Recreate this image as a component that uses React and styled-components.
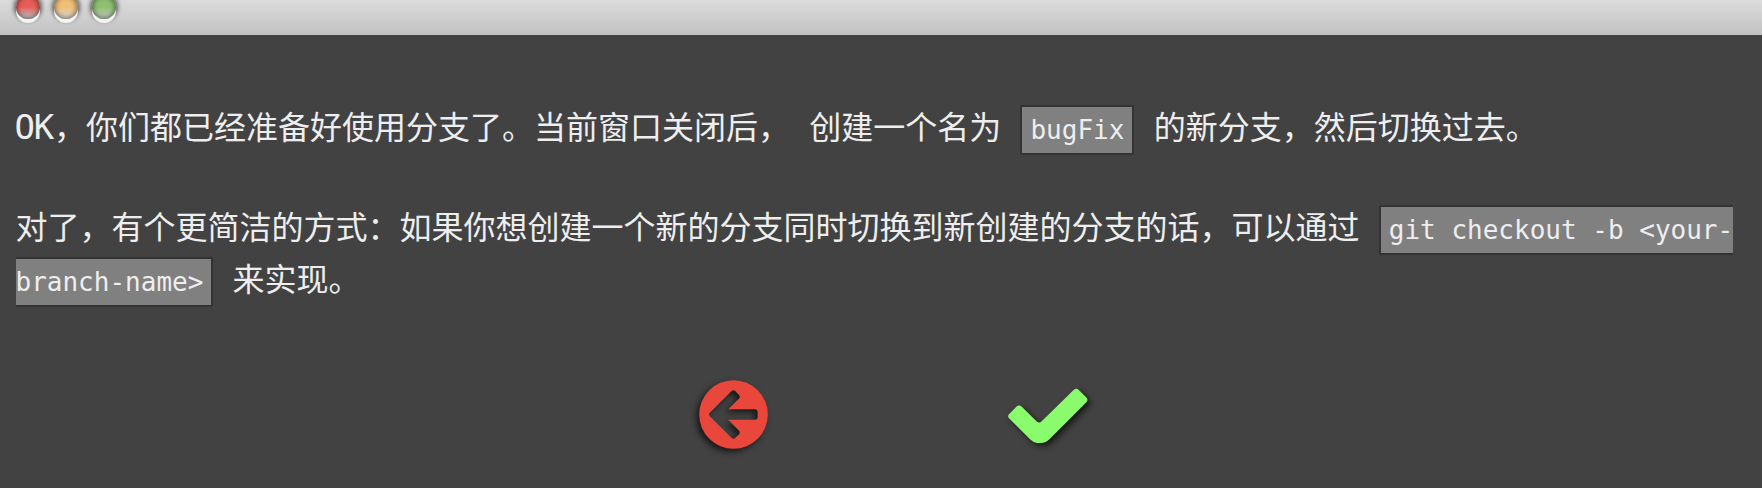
import React from "react";
import styled, { createGlobalStyle } from "styled-components";

const GlobalStyle = createGlobalStyle`
  body {
    margin: 0;
    background: #424242;
  }
`;

const Window = styled.div`
  box-sizing: border-box;
  width: 1762px;
  height: 488px;
  overflow: hidden;
  background: #424242;
  color: #eee;
  font-family: "DejaVu Sans Mono", "Noto Sans CJK SC", monospace;
`;

const TitleBar = styled.header`
  display: flex;
  gap: 14px;
  box-sizing: border-box;
  height: 35px;
  padding-left: 16px;
  background: linear-gradient(#dbdbdb, #c2c2c2);
`;

const Light = styled.span`
  width: 24px;
  height: 24px;
  margin-top: -5px;
  border-radius: 50%;
  background: linear-gradient(
    ${(p) => p.$color} 50%,
    ${(p) => p.$glow} 90%
  );
  box-shadow:
    0 4px 0 #f4f4f4,
    0 0 4px 2px rgba(0, 0, 0, 0.55),
    inset 0 0 5px 1px rgba(0, 0, 0, 0.5);
`;

const Content = styled.main`
  padding: 67px 16px 0 15.5px;
`;

const Paragraph = styled.p`
  margin: 0 0 48px;
  font-size: 32px;
  line-height: 52px;
`;

const Latin = styled.span`
  margin: 0 1px 0 -1px;
  font-size: 34px;
  line-height: 1;
  letter-spacing: -1.27px;
`;

const Code = styled.code`
  padding: 8px;
  border: 2px solid #333;
  background: #808080;
  font-family: "DejaVu Sans Mono", monospace;
  font-size: 26px;
  line-height: 1;
`;

const Actions = styled.div`
  display: flex;
  align-items: flex-start;
  justify-content: center;
  gap: 240px;
  padding: 25.5px 0 0 25px;
`;

const IconButton = styled.button`
  display: flex;
  margin: ${(p) => p.$drop || 0}px 0 0;
  padding: 0;
  border: 0;
  background: none;
  cursor: pointer;

  svg {
    overflow: visible;
    filter: drop-shadow(${(p) => p.$shadowX}px 3px 3px rgba(0, 0, 0, 0.65));
  }
`;

const BackIcon = () => (
  <svg width="69" height="69" viewBox="0 0 69 69">
    <path
      fill="#ea473c"
      fillRule="evenodd"
      d="M34.5 0.2a34.3 34.3 0 1 1 0 68.6a34.3 34.3 0 0 1 0-68.6Z
         M32.4 11.2L11.1 32.5Q9.1 34.5 11.1 36.5L32.4 57.8Q34.4 59.8 36.4 57.8L39.8 54.4Q41.8 52.4 39.8 50.4L29.2 39.8H55.8Q58.6 39.8 58.6 37V32.1Q58.6 29.3 55.8 29.3H29.2L39.8 18.7Q41.8 16.7 39.8 14.7L36.4 11.2Q34.4 9.2 32.4 11.2Z"
    />
  </svg>
);

const CheckIcon = () => (
  <svg width="80" height="56" viewBox="0 0 80 56">
    <path
      fill="#89fb6c"
      d="M1 26.3L8.6 18.6Q11 16.2 13.5 18.6L28.8 33.5Q31.3 35.6 33.7 33.3L65.6 1.9Q68.4 -0.6 70.8 1.9L78.4 9.4Q80.6 11.8 78.4 14.2L41.2 51.4Q37.5 55 34 55H29Q26 55 22.6 51.8L1 30.2Q-0.8 28.2 1 26.3Z"
    />
  </svg>
);

const lights = [
  { name: "close", color: "#e85d58", glow: "#c9b9b8" },
  { name: "minimize", color: "#f0bf76", glow: "#e0d4c4" },
  { name: "zoom", color: "#8fc170", glow: "#bccab4" },
];

export default function App() {
  return (
    <Window>
      <GlobalStyle />
      <TitleBar>
        {lights.map((light) => (
          <Light key={light.name} $color={light.color} $glow={light.glow} />
        ))}
      </TitleBar>
      <Content>
        <Paragraph>
          <Latin>OK</Latin>，你们都已经准备好使用分支了。当前窗口关闭后， 创建一个名为{" "}
          <Code>bugFix</Code> 的新分支，然后切换过去。
        </Paragraph>
        <Paragraph>
          对了，有个更简洁的方式：如果你想创建一个新的分支同时切换到新创建的分支的话，可以通过{" "}
          <Code>git checkout -b &lt;your-branch-name&gt;</Code> 来实现。
        </Paragraph>
        <Actions>
          <IconButton $shadowX={-3} aria-label="返回">
            <BackIcon />
          </IconButton>
          <IconButton $shadowX={3} $drop={8} aria-label="确认">
            <CheckIcon />
          </IconButton>
        </Actions>
      </Content>
    </Window>
  );
}
